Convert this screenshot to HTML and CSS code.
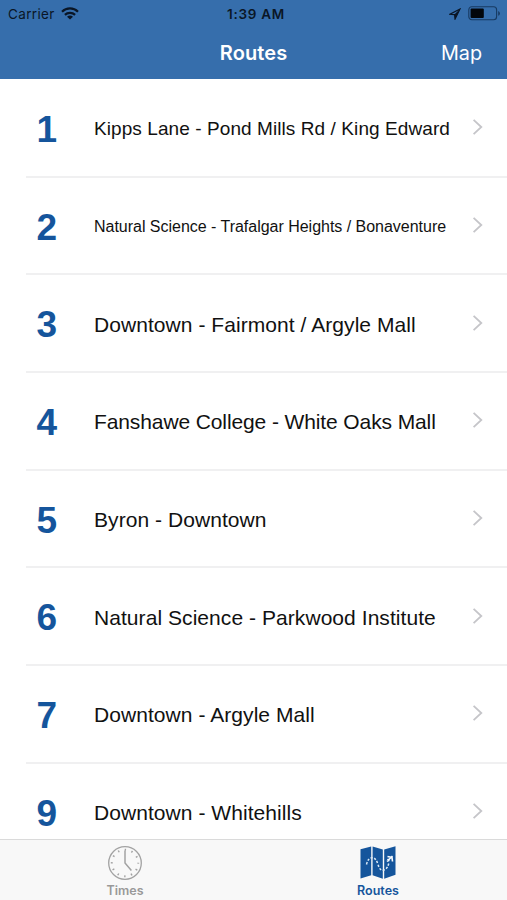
FILE: index.html
```html
<!DOCTYPE html>
<html lang="en">
<head>
<meta charset="utf-8">
<title>Routes</title>
<link rel="stylesheet" href="styles.css">
</head>
<body>
<div class="app">
  <header class="header">
    <div class="status">
      <div class="status-left"><span class="carrier">Carrier</span>
        <svg class="wifi" width="18" height="13" viewBox="0 0 18 13"><g fill="none" stroke="#0a1626" stroke-width="2.2"><path d="M1 4.7a11.4 11.4 0 0 1 16 0"/><path d="M3.9 7.9a7.3 7.3 0 0 1 10.2 0"/></g><path d="M9 12.6 6 9.8a4.4 4.4 0 0 1 6 0z" fill="#0a1626"/></svg>
      </div>
      <span class="clock">1:39 AM</span>
      <div class="status-right">
        <svg width="12" height="12" viewBox="0 0 12 12"><path d="M11 1 1 6.2l4.600.4.4 4.600z" fill="none" stroke="#0a1626" stroke-width="1.1"/><path d="M11 1 5.400 6.600l.7 4.700z" fill="#0a1626"/></svg>
        <svg width="33" height="15" viewBox="0 0 33 15"><rect x=".8" y=".8" width="27.8" height="13" rx="3" fill="none" stroke="#173a61" stroke-width="1.1"/><rect x="2.6" y="2.5" width="13.2" height="9.6" rx="1" fill="#02060b"/><path d="M30.2 5v4.8q1.7-.8 1.7-2.4T30.2 5z" fill="#173a61"/></svg>
      </div>
    </div>
    <div class="nav"><h1 class="title">Routes</h1><span class="map-link">Map</span></div>
  </header>
  <main class="list">
    <div class="row"><span class="num">1</span><span class="name r1">Kipps Lane - Pond Mills Rd / King Edward</span><svg class="chev" viewBox="0 0 12 18"><path d="m1.6 1.8 7.7 7.2-7.7 7.2"/></svg></div>
    <div class="row"><span class="num">2</span><span class="name r2">Natural Science - Trafalgar Heights / Bonaventure</span><svg class="chev" viewBox="0 0 12 18"><path d="m1.6 1.8 7.7 7.2-7.7 7.2"/></svg></div>
    <div class="row"><span class="num">3</span><span class="name">Downtown - Fairmont / Argyle Mall</span><svg class="chev" viewBox="0 0 12 18"><path d="m1.6 1.8 7.7 7.2-7.7 7.2"/></svg></div>
    <div class="row"><span class="num">4</span><span class="name r4">Fanshawe College - White Oaks Mall</span><svg class="chev" viewBox="0 0 12 18"><path d="m1.6 1.8 7.7 7.2-7.7 7.2"/></svg></div>
    <div class="row"><span class="num">5</span><span class="name">Byron - Downtown</span><svg class="chev" viewBox="0 0 12 18"><path d="m1.6 1.8 7.7 7.2-7.7 7.2"/></svg></div>
    <div class="row"><span class="num">6</span><span class="name">Natural Science - Parkwood Institute</span><svg class="chev" viewBox="0 0 12 18"><path d="m1.6 1.8 7.7 7.2-7.7 7.2"/></svg></div>
    <div class="row"><span class="num">7</span><span class="name">Downtown - Argyle Mall</span><svg class="chev" viewBox="0 0 12 18"><path d="m1.6 1.8 7.7 7.2-7.7 7.2"/></svg></div>
    <div class="row"><span class="num">9</span><span class="name">Downtown - Whitehills</span><svg class="chev" viewBox="0 0 12 18"><path d="m1.6 1.8 7.7 7.2-7.7 7.2"/></svg></div>
  </main>
  <nav class="tabs">
    <div class="tab">
      <svg width="36" height="36" viewBox="0 0 36 36"><circle cx="18" cy="18" r="16.3" fill="none" stroke="#a2a2a2" stroke-width="1.3"/><circle cx="18" cy="18" r="13.2" fill="none" stroke="#a2a2a2" stroke-width="2" stroke-dasharray="1.4 5.512" stroke-dashoffset=".7"/><path d="M18 5.5V18l6.4 7.6" fill="none" stroke="#a2a2a2" stroke-width="1.5"/></svg>
      <span class="label">Times</span>
    </div>
    <div class="tab active">
      <svg width="36" height="36" viewBox="0 0 36 36"><path d="M.5 4.2 11.2 1.6v28.6L.5 33.5zM12.6 1.6l10.2 2.8v29.3l-10.2-3.5zM24.2 4.4 35.500 1.200v28.600l-11.300 3.900z" fill="#15559c"/><path d="M6.500 19.500Q8 13 12 12.800T18 19.500t6 5.500T29 17" fill="none" stroke="#dbe9f6" stroke-width="1.5" stroke-dasharray="2.200 1.600"/><path d="m27 16.500 5.500-5.500M27.500 11.500l4.500 1 .5 4M27.500 14l2 2" fill="none" stroke="#f7fbff" stroke-width="1.6"/></svg>
      <span class="label">Routes</span>
    </div>
  </nav>
</div>
</body>
</html>
```
FILE: styles.css
```css
* { box-sizing: border-box; }
body { margin: 0; background: #fff; font-family: "Liberation Sans", sans-serif; }
.app { width: 507px; height: 900px; overflow: hidden; display: flex; flex-direction: column; }
.header { height: 79px; flex: none; background: #366eac; font-family: Inter, sans-serif; }
.status { height: 27px; display: grid; grid-template-columns: 1fr auto 1fr; align-items: center; padding: 0 6px 0 8px; color: #0a1626; font-size: 13.5px; }
.status-left { display: flex; align-items: center; gap: 6px; letter-spacing: 0.35px; }
.clock { font-weight: 600; letter-spacing: 0.7px; padding-left: 3px; }
.status-right { display: flex; align-items: center; justify-content: flex-end; gap: 7px; }
.nav { height: 52px; display: grid; grid-template-columns: 1fr auto 1fr; align-items: center; padding: 0 25px; color: #fff; }
.title { grid-column: 2; margin: 0; font-size: 20px; font-weight: 600; letter-spacing: 0.1px; }
.map-link { justify-self: end; font-size: 19.800px; }
.list { flex: 1; min-height: 0; overflow: hidden; padding-top: 1px; }
.row { height: 97.7px; margin-left: 26px; padding: 0 23px 0 0; display: flex; align-items: center; border-bottom: 2px solid #f0f0f1; }
.num { width: 68px; padding: 4px 0 0 10.500px; color: #15559c; font-size: 37px; line-height: 44px; font-weight: 700; }
.name { flex: 1; padding-top: 2.600px; color: #111; font-size: 21px; letter-spacing: 0.06px; white-space: nowrap; }
.r1 { font-size: 19px; letter-spacing: 0.08px; }
.r2 { font-size: 16px; letter-spacing: -0.02px; }
.r4 { letter-spacing: -0.11px; }
.chev { width: 12px; height: 18px; flex: none; margin-bottom: 1px; fill: none; stroke: #c5c5c9; stroke-width: 1.8; }
.tabs { height: 61px; flex: none; display: flex; background: #f8f8f8; border-top: 1px solid #dadada; padding-right: 2px; }
.tab { flex: 1; display: flex; flex-direction: column; align-items: center; padding: 5px 3px 0 0; color: #999; font: 600 12.500px/18px Inter, sans-serif; }
.tab svg { flex: none; }
.label { margin-top: 1px; }
.active { color: #15559c; padding-right: 2px; }
```
